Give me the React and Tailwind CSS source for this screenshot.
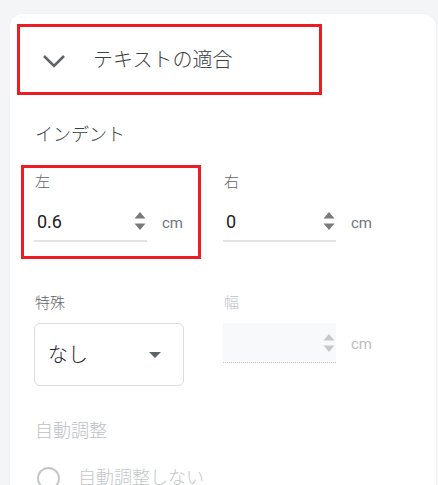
const font = { fontFamily: 'Roboto, "Noto Sans CJK JP", sans-serif' };

function Spinner({ muted }) {
  const c = muted ? "#c8c8c8" : "#7a7a7a";
  return (
    <svg width="12" height="20" viewBox="0 0 12 20" className="shrink-0">
      <path d="M6 1 L11.5 7.5 L0.5 7.5 Z" fill={c} />
      <path d="M0.5 12.5 L11.5 12.5 L6 19 Z" fill={c} />
    </svg>
  );
}

function NumberField({ label, value }) {
  return (
    <div className="flex flex-col">
      <div className="text-[15px] leading-[20px] text-[#5f6368] pl-[1px]">{label}</div>
      <div className="flex items-center mt-[9px]">
        <div className="w-[113px] h-[41px] flex items-center justify-between border-b-2 border-[#e2e3e5] pl-[3px] pr-[1px]">
          <span className="text-[18px] leading-[24px] text-[#202124] font-normal mt-[2px]">{value}</span>
          <Spinner />
        </div>
        <span className="ml-[15px] text-[15px] text-[#70757a] mt-[3px] font-normal">cm</span>
      </div>
    </div>
  );
}

export default function App() {
  return (
    <div style={font} className="w-[438px] h-[485px] overflow-hidden bg-[#f4f5f7] pt-[14px] pl-[10px] pr-[2px] font-light">
      <div className="bg-white rounded-t-[12px] h-full shadow-[0_0_2px_rgba(0,0,0,0.06)]">
        <div className="pt-[10px] pl-[7px]">
          <div className="w-[305px] h-[71px] border-[3px] border-[#ed1c24] flex items-center pl-[22px]">
            <svg width="24" height="14" viewBox="0 0 24 14" className="mt-[2px]">
              <path d="M2 2 L12 12 L22 2" fill="none" stroke="#5f6368" strokeWidth="2.6" />
            </svg>
            <span className="ml-[27px] text-[20px] leading-[26px] text-[#3c4043]">テキストの適合</span>
          </div>
        </div>

        <div className="pl-[25px] mt-[28px] text-[18px] leading-[24px] text-[#3c4043]">インデント</div>

        <div className="flex mt-[18px] pl-[11px]">
          <div className="w-[180px] h-[94px] border-[3px] border-[#ed1c24] pl-[10px] pt-[4px]">
            <NumberField label="左" value="0.6" />
          </div>
          <div className="ml-[22px] pt-[7px]">
            <NumberField label="右" value="0" />
          </div>
        </div>

        <div className="flex mt-[34px] pl-[24px]">
          <div className="flex flex-col">
            <div className="text-[15px] leading-[20px] text-[#5f6368] pl-[1px]">特殊</div>
            <div className="mt-[10px] w-[150px] h-[63px] border border-[#dadce0] rounded-[6px] flex items-center justify-between pl-[13px] pr-[22px]">
              <span className="text-[20px] leading-[26px] text-[#202124]">なし</span>
              <svg width="12" height="6" viewBox="0 0 12 6">
                <path d="M0 0 L12 0 L6 6 Z" fill="#5f6368" />
              </svg>
            </div>
          </div>
          <div className="flex flex-col ml-[39px]">
            <div className="text-[15px] leading-[20px] text-[#bdc1c6] pl-[1px]">幅</div>
            <div className="flex items-center mt-[10px]">
              <div className="w-[113px] h-[40px] flex items-center justify-end bg-[#f8f9fa] border-b border-dotted border-[#c4c7c9] pr-[1px]">
                <Spinner muted />
              </div>
              <span className="ml-[15px] text-[15px] text-[#bdbdbd] mt-[3px] font-normal">cm</span>
            </div>
          </div>
        </div>

        <div className="pl-[25px] mt-[33px] text-[18px] leading-[24px] text-[#bdc1c6]">自動調整</div>

        <div className="flex items-center pl-[27px] mt-[23px]">
          <div className="w-[23px] h-[23px] rounded-full border-[2.5px] border-[#c4c7c9]" />
          <span className="ml-[18px] text-[18px] leading-[24px] text-[#c4c7c9]">自動調整しない</span>
        </div>
      </div>
    </div>
  );
}
